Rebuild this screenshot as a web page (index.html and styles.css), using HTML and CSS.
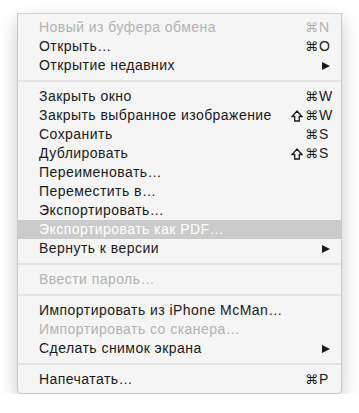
FILE: index.html
```html
<!DOCTYPE html>
<html lang="ru">
<head>
    <meta charset="UTF-8">
    <meta name="viewport" content="width=device-width, initial-scale=1.0">
    <title>Файл</title>
    <link rel="stylesheet" href="styles.css">
</head>
<body>

<div class="menu">
    <div class="item disabled"><span class="label">Новый из буфера обмена</span><span class="keys"><span class="mod">⌘</span><span class="key">N</span></span></div>
    <div class="item"><span class="label">Открыть…</span><span class="keys"><span class="mod">⌘</span><span class="key">O</span></span></div>
    <div class="item"><span class="label">Открытие недавних</span><span class="arrow"></span></div>
    <div class="separator"></div>
    <div class="item"><span class="label">Закрыть окно</span><span class="keys"><span class="mod">⌘</span><span class="key">W</span></span></div>
    <div class="item"><span class="label">Закрыть выбранное изображение</span><span class="keys"><svg class="shift" viewBox="0 0 12 12"><path d="M6 1 L11 6.5 H8.3 V11 H3.7 V6.5 H1 Z"/></svg><span class="mod">⌘</span><span class="key">W</span></span></div>
    <div class="item"><span class="label">Сохранить</span><span class="keys"><span class="mod">⌘</span><span class="key">S</span></span></div>
    <div class="item"><span class="label">Дублировать</span><span class="keys"><svg class="shift" viewBox="0 0 12 12"><path d="M6 1 L11 6.5 H8.3 V11 H3.7 V6.5 H1 Z"/></svg><span class="mod">⌘</span><span class="key">S</span></span></div>
    <div class="item"><span class="label">Переименовать…</span></div>
    <div class="item"><span class="label">Переместить в…</span></div>
    <div class="item"><span class="label">Экспортировать…</span></div>
    <div class="item selected"><span class="label">Экспортировать как PDF…</span></div>
    <div class="item"><span class="label">Вернуть к версии</span><span class="arrow"></span></div>
    <div class="separator"></div>
    <div class="item disabled"><span class="label">Ввести пароль…</span></div>
    <div class="separator"></div>
    <div class="item"><span class="label">Импортировать из iPhone McMan…</span></div>
    <div class="item disabled"><span class="label">Импортировать со сканера…</span></div>
    <div class="item"><span class="label">Сделать снимок экрана</span><span class="arrow"></span></div>
    <div class="separator"></div>
    <div class="item"><span class="label">Напечатать…</span><span class="keys"><span class="mod">⌘</span><span class="key">P</span></span></div>
</div>

</body>
</html>
```

FILE: styles.css
```css
body {
    margin: 0;
    padding: 13px 17px 0 17px;
    background-color: #fff;
    font-family: 'Liberation Sans', Arial, sans-serif;
}

.menu {
    width: 323px;
    padding: 4px 0;
    background-color: #f5f5f5;
    border: 1px solid #c9c9c9;
    border-top-color: #d4d4d4;
    border-radius: 0 0 5px 5px;
    box-shadow: 0 8px 18px rgba(0, 0, 0, 0.22);
}

.item {
    display: flex;
    align-items: center;
    height: 19px;
    padding: 0 10px 0 21px;
    font-size: 14px;
    line-height: 19px;
    color: #1a1a1a;
}

.item.disabled {
    color: #b2b2b2;
}

.item.selected {
    background-color: #cbcbcb;
    color: #fff;
}

.label {
    flex: 1;
    white-space: nowrap;
    letter-spacing: 0.45px;
}

.keys {
    display: flex;
    align-items: center;
    font-size: 14px;
}

.shift {
    width: 12px;
    height: 12px;
    margin-right: 2px;
    fill: none;
    stroke: currentColor;
    stroke-width: 1.3;
    stroke-linejoin: miter;
}

.mod {
    font-family: 'DejaVu Sans', sans-serif;
    font-size: 13px;
}

.key {
    width: 12px;
    margin-left: 1px;
}

.arrow {
    width: 0;
    height: 0;
    margin-right: 1px;
    border-top: 4.5px solid transparent;
    border-bottom: 4.5px solid transparent;
    border-left: 8px solid #1a1a1a;
}

.separator {
    height: 2px;
    margin: 5px 0;
    background-color: #e3e3e3;
}
```
